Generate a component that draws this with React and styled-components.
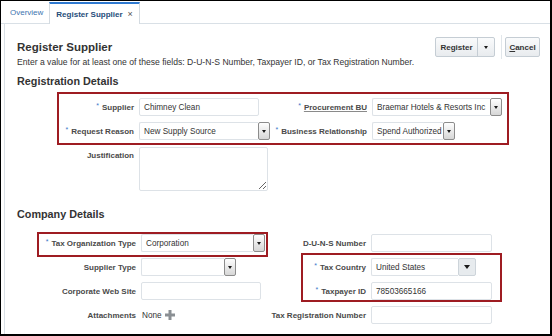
import React from "react";
import styled, { createGlobalStyle, css } from "styled-components";

const GlobalStyle = createGlobalStyle`
  body {
    margin: 0;
    background: #fff;
    font-family: "Liberation Sans", Arial, sans-serif;
    color: #333;
  }
`;

const Frame = styled.div`
  width: 552px;
  height: 336px;
  box-sizing: border-box;
  border: solid #000;
  border-width: 1px 2px 2px 1px;
  display: flex;
  flex-direction: column;
  overflow: hidden;
  background: #fff;
`;

const TabBar = styled.div`
  height: 23px;
  box-sizing: border-box;
  flex-shrink: 0;
  display: flex;
  align-items: flex-end;
  padding-left: 3px;
  border-bottom: 1px solid #d9e0e6;
`;

const Tab = styled.div`
  height: 21px;
  box-sizing: border-box;
  display: flex;
  align-items: center;
  padding: 0 6px;
  font-size: 8px;
  color: #3c74b0;
  white-space: nowrap;

  ${(p) =>
    p.$active &&
    css`
      height: 22px;
      margin-bottom: -1px;
      background: #fff;
      color: #1f4d7a;
      font-weight: 700;
      border-top: 2px solid #2f7ad1;
      border-left: 1px solid #d4dbe1;
      border-right: 1px solid #d4dbe1;
    `}
`;

const Close = styled.span`
  margin-left: 5px;
  font-size: 9px;
  font-weight: 400;
  color: #555;
`;

const Panel = styled.div`
  flex: 1;
  margin-left: 3px;
  border-left: 1px solid #d9e0e6;
  padding: 13px 10px 0 12px;
`;

const HeaderRow = styled.div`
  display: flex;
  align-items: center;
  justify-content: space-between;
  height: 20px;
`;

const Title = styled.h1`
  margin: 0;
  font-size: 11.5px;
  line-height: 14px;
  font-weight: 700;
  color: #333;
`;

const Actions = styled.div`
  display: flex;
  align-items: center;
`;

const SplitButton = styled.div`
  display: flex;
  height: 20px;
  box-sizing: border-box;
  border: 1px solid #c5cdd4;
  border-radius: 2px;
  background: linear-gradient(#fafbfc, #e8ebee);
`;

const ButtonPart = styled.div`
  width: ${(p) => p.$w}px;
  box-sizing: border-box;
  display: flex;
  align-items: center;
  justify-content: center;
  font-size: 8px;
  font-weight: 700;
  color: #333;
  ${(p) => p.$divider && "border-left: 1px solid #c5cdd4;"}
`;

const Caret = styled.span`
  width: 0;
  height: 0;
  border-left: ${(p) => (p.$big ? 3 : 2.5)}px solid transparent;
  border-right: ${(p) => (p.$big ? 3 : 2.5)}px solid transparent;
  border-top: ${(p) => (p.$big ? 4 : 3)}px solid #1a1a1a;
`;

const Separator = styled.div`
  width: 1px;
  height: 24px;
  background: #e1e6ea;
  margin: 0 3px 0 6px;
`;

const Instruction = styled.div`
  font-size: 8.6px;
  line-height: 10px;
  white-space: nowrap;
  color: #333;
`;

const SectionTitle = styled.h2`
  margin: ${(p) => p.$top}px 0 0;
  font-size: 10.8px;
  line-height: 13px;
  font-weight: 700;
  color: #333;
`;

const CalloutBox = styled.div`
  border: 2px solid #9e1c22;
  box-sizing: border-box;
`;

const RegBox = styled(CalloutBox)`
  margin: 4px 0 0 40px;
  width: 452px;
  padding: 4px 5px 3px 0;
  display: grid;
  grid-template-columns: 80px 131px 102px 130px;
  row-gap: 6px;
  align-items: center;
`;

const Label = styled.div`
  font-size: 8px;
  font-weight: 700;
  color: #4a4a4a;
  text-align: right;
  padding-right: 5px;
  white-space: nowrap;

  ${(p) =>
    p.$top &&
    css`
      align-self: start;
      padding-top: 4px;
    `}
`;

const LinkText = styled.span`
  text-decoration: underline;
  text-decoration-color: #8a8a8a;
`;

const Req = styled.span`
  color: #3a78c9;
  font-size: 7px;
  font-weight: 400;
  vertical-align: 2px;
  margin-right: 3px;
`;

const Field = styled.div`
  width: ${(p) => p.$w}px;
  height: 18px;
  box-sizing: border-box;
  border: 1px solid #dde2e7;
  border-radius: 2px;
  background: #fff;
  font-size: 8.2px;
  color: #333;
  padding: 0 3px 0 4px;
  display: flex;
  align-items: center;
  white-space: nowrap;
  overflow: hidden;
`;

const SelectBox = styled.div`
  display: flex;
  width: ${(p) => p.$w}px;
  height: 18px;
`;

const SelectValue = styled(Field)`
  flex: 1;
  width: auto;
  min-width: 0;
  border-right: none;
  border-radius: 2px 0 0 2px;
`;

const DropButton = styled.div`
  width: ${(p) => (p.$lov ? 18 : 12)}px;
  height: 18px;
  flex-shrink: 0;
  box-sizing: border-box;
  border: 1px solid ${(p) => (p.$lov ? "#cdd4da" : "#8c8c8c")};
  border-radius: 2px;
  background: ${(p) => (p.$lov ? "#e7ebee" : "linear-gradient(#fefefe, #d6d6d6)")};
  display: flex;
  align-items: center;
  justify-content: center;
`;

const Select = ({ w, value, lov }) => (
  <SelectBox $w={w}>
    <SelectValue>{value}</SelectValue>
    <DropButton $lov={lov}>
      <Caret $big={lov} />
    </DropButton>
  </SelectBox>
);

const JustRow = styled.div`
  display: grid;
  grid-template-columns: 80px 129px;
  margin: 2px 0 0 42px;
`;

const TextArea = styled.textarea`
  display: block;
  width: 129px;
  height: 44px;
  box-sizing: border-box;
  margin: 0;
  padding: 0;
  border: 1px solid #dde2e7;
  border-radius: 2px;
  resize: both;
`;

const CompanyGrid = styled.div`
  display: flex;
  margin: 13px 0 0 23px;
`;

const Column = styled.div`
  display: flex;
  flex-direction: column;
  gap: 6px;
  width: ${(p) => p.$w}px;
`;

const Row = styled.div`
  display: grid;
  grid-template-columns: 1fr ${(p) => p.$field}px;
  height: 18px;
  align-items: center;
`;

const Callout = styled(CalloutBox)`
  margin: ${(p) => p.$m};
  padding: ${(p) => p.$p};
  display: flex;
  flex-direction: column;
  gap: 6px;
`;

const Attach = styled.div`
  display: flex;
  align-items: center;
  gap: 3px;
  font-size: 8.2px;
  color: #333;
  padding-left: 1px;
`;

const PlusIcon = () => (
  <svg width="10" height="10" viewBox="0 0 10 10">
    <rect x="3.5" y="0" width="3" height="10" fill="#8a8f94" />
    <rect x="0" y="3.5" width="10" height="3" fill="#8a8f94" />
  </svg>
);

export default function App() {
  return (
    <>
      <GlobalStyle />
      <Frame>
        <TabBar>
          <Tab>Overview</Tab>
          <Tab $active>
            Register Supplier<Close>×</Close>
          </Tab>
        </TabBar>

        <Panel>
          <HeaderRow>
            <Title>Register Supplier</Title>
            <Actions>
              <SplitButton>
                <ButtonPart $w={41}>Register</ButtonPart>
                <ButtonPart $w={17} $divider>
                  <Caret />
                </ButtonPart>
              </SplitButton>
              <Separator />
              <SplitButton>
                <ButtonPart $w={33}>
                  <span>
                    <u>C</u>ancel
                  </span>
                </ButtonPart>
              </SplitButton>
            </Actions>
          </HeaderRow>
          <Instruction>
            Enter a value for at least one of these fields: D-U-N-S Number, Taxpayer ID, or Tax
            Registration Number.
          </Instruction>

          <SectionTitle $top={8}>Registration Details</SectionTitle>
          <RegBox>
            <Label>
              <Req>*</Req>Supplier
            </Label>
            <Field $w={120}>Chimney Clean</Field>
            <Label>
              <Req>*</Req>
              <LinkText>Procurement BU</LinkText>
            </Label>
            <Select w={130} value="Braemar Hotels & Resorts Inc" />

            <Label>
              <Req>*</Req>Request Reason
            </Label>
            <Select w={131} value="New Supply Source" />
            <Label>
              <Req>*</Req>Business Relationship
            </Label>
            <Select w={83} value="Spend Authorized" />
          </RegBox>
          <JustRow>
            <Label $top>Justification</Label>
            <TextArea readOnly />
          </JustRow>

          <SectionTitle $top={17}>Company Details</SectionTitle>
          <CompanyGrid>
            <Column $w={225}>
              <Callout $m="-2px -3px -5px -3px" $p="0 1px 3px 1px">
                <Row $field={124}>
                  <Label>
                    <Req>*</Req>Tax Organization Type
                  </Label>
                  <Select w={124} value="Corporation" />
                </Row>
              </Callout>
              <Row $field={124}>
                <Label>Supplier Type</Label>
                <Select w={95} value="" />
              </Row>
              <Row $field={124}>
                <Label>Corporate Web Site</Label>
                <Field $w={120} />
              </Row>
              <Row $field={124}>
                <Label>Attachments</Label>
                <Attach>
                  None <PlusIcon />
                </Attach>
              </Row>
            </Column>

            <Column $w={227}>
              <Row $field={121}>
                <Label>D-U-N-S Number</Label>
                <Field $w={121} />
              </Row>
              <Callout $m="-5px -10px -2px 36px" $p="3px 8px 0 0">
                <Row $field={121}>
                  <Label>
                    <Req>*</Req>Tax Country
                  </Label>
                  <Select w={105} value="United States" lov />
                </Row>
                <Row $field={121}>
                  <Label>
                    <Req>*</Req>Taxpayer ID
                  </Label>
                  <Field $w={121}>78503665166</Field>
                </Row>
              </Callout>
              <Row $field={121}>
                <Label>Tax Registration Number</Label>
                <Field $w={121} />
              </Row>
            </Column>
          </CompanyGrid>
        </Panel>
      </Frame>
    </>
  );
}
